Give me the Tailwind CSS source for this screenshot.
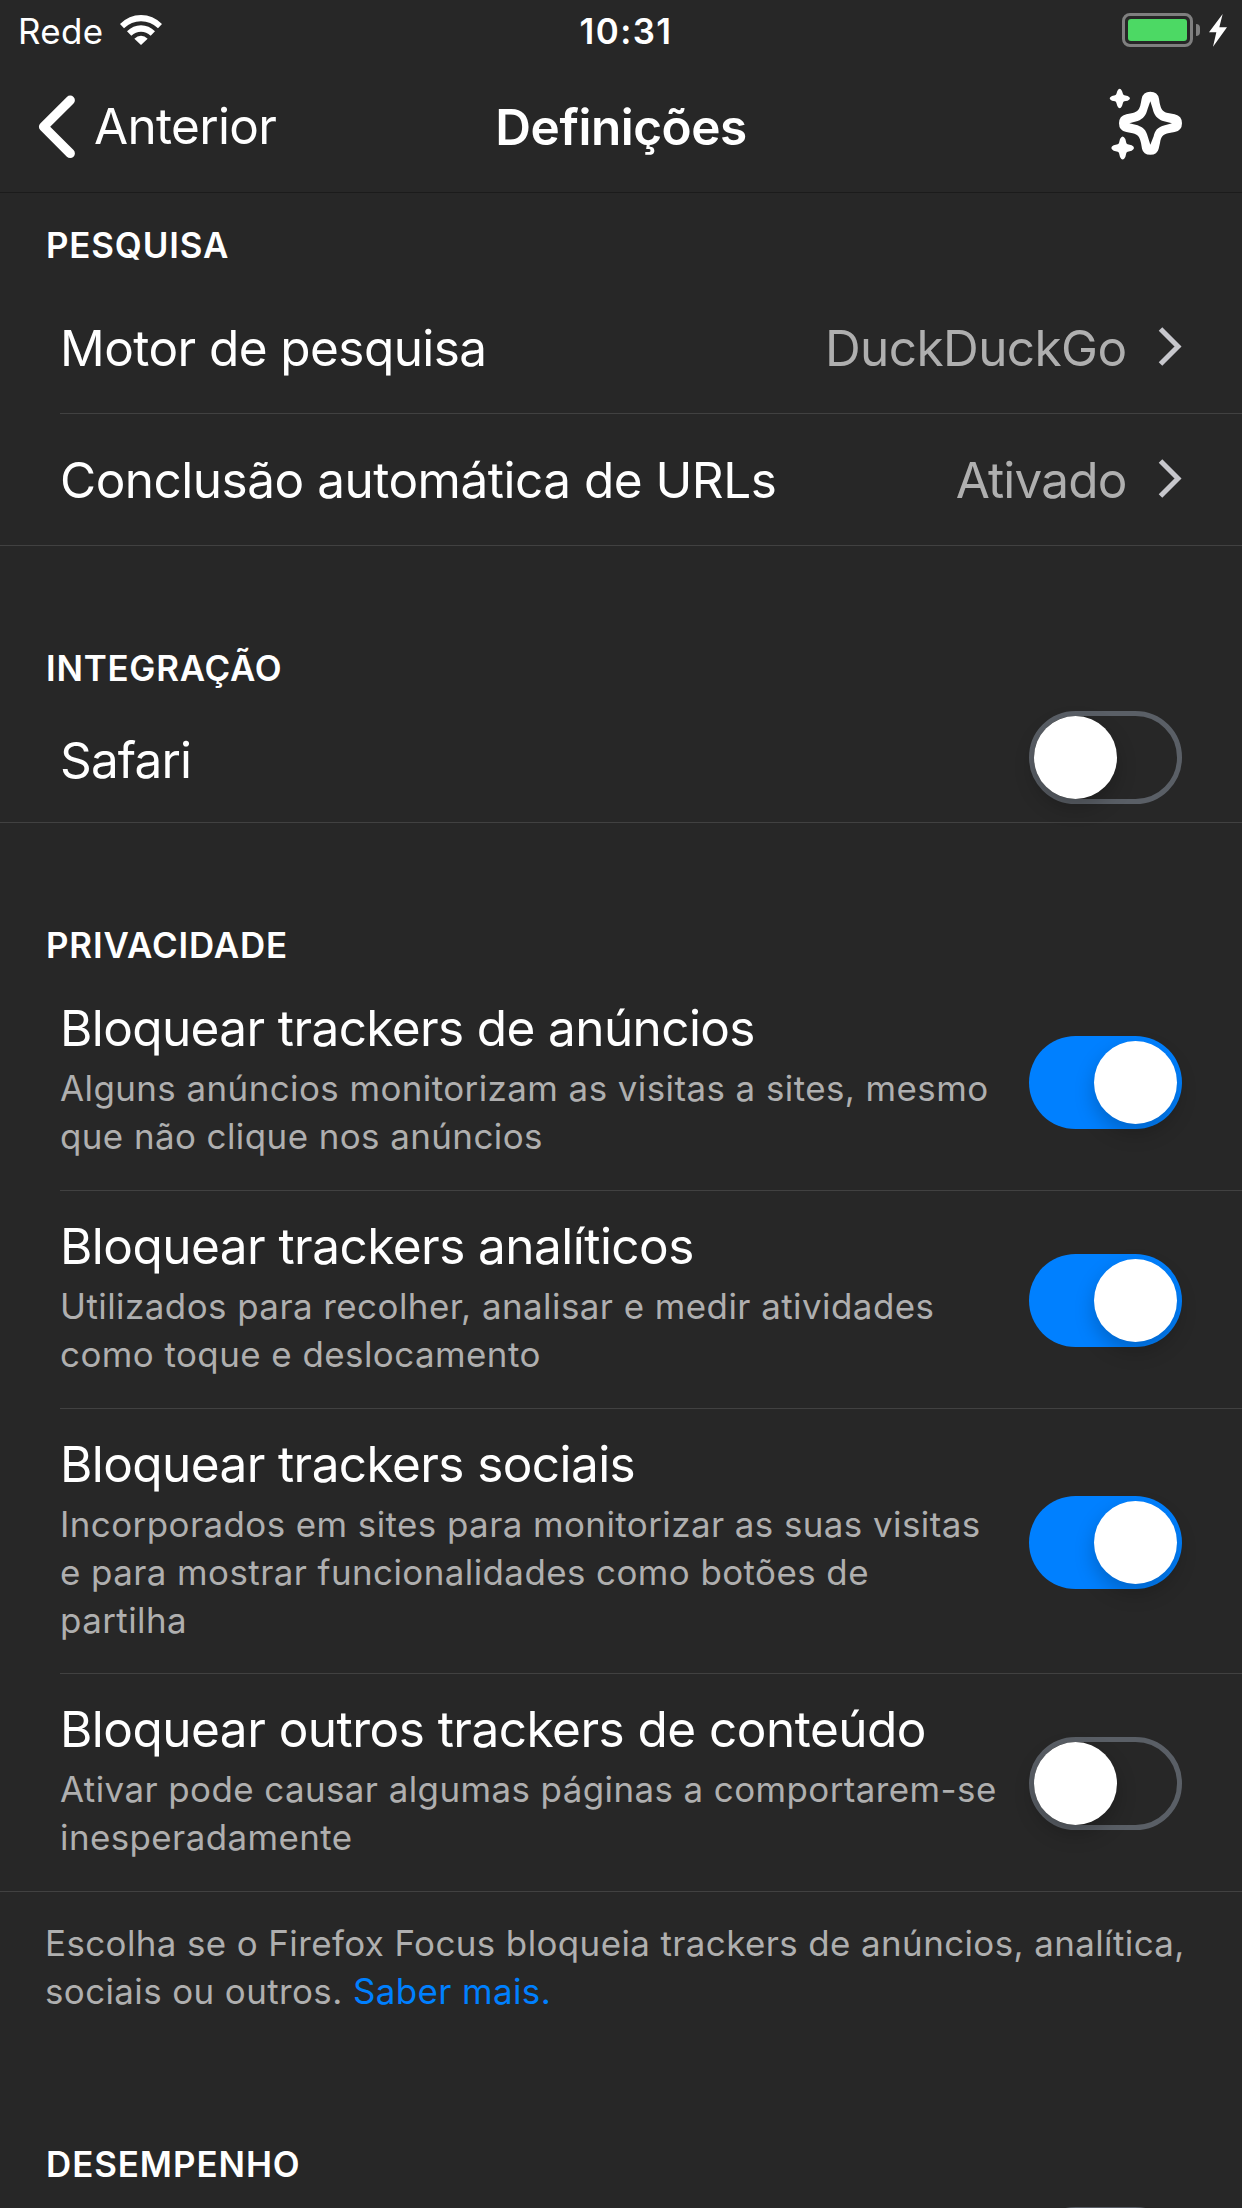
<!DOCTYPE html>
<html lang="pt">
<head>
<meta charset="utf-8">
<title>Definições</title>
<script src="https://cdn.jsdelivr.net/npm/@tailwindcss/browser@4"></script>
</head>
<body class="h-[2208px] w-[1242px] overflow-hidden bg-[#272727] font-['Inter',sans-serif] text-white">
<div class="flex h-[2208px] flex-col overflow-hidden">

  <!-- Status bar -->
  <div class="grid h-[62px] shrink-0 grid-cols-3 items-center text-[34.9px] leading-[42px]">
    <div class="flex items-center gap-[17px] pl-[18px]">
      <span class="tracking-[0.35px]">Rede</span>
      <svg class="mb-[2px] h-[30px] w-[42px]" viewBox="0 0 126 90" fill="#fff">
        <path d="M0 27Q27 0 63 0Q99 0 126 27L114 40Q92 19 63 19Q34 19 12 40Z"/>
        <path d="M21 49Q39 31 63 31Q87 31 105 49L92 62Q79 50 63 50Q47 50 34 62Z"/>
        <path d="M43 71Q52 62 63 62Q74 62 83 71L63 90Z"/>
      </svg>
    </div>
    <div class="pl-[10px] text-center font-semibold tracking-[1.4px]">10:31</div>
    <div class="flex items-center justify-end pr-[15px]">
      <div class="mb-[2px] h-[34px] w-[71px] rounded-[8px] border-[3px] border-[#7f7f7f] p-[3px]">
        <div class="h-full rounded-[3px] bg-[#4cd964]"></div>
      </div>
      <div class="mb-[2px] ml-[3px] h-[12px] w-[4px] rounded-r-full bg-[#7f7f7f]"></div>
      <svg class="mb-[1px] ml-[9px] h-[33px] w-[18px]" viewBox="0 0 54 99" fill="#fff"><path d="M41 0L0 55H22L12 98L54 40H31Z"/></svg>
    </div>
  </div>

  <!-- Navigation bar -->
  <div class="grid h-[131px] shrink-0 grid-cols-3 items-center border-b border-[#1b1b1b] text-[49.5px] leading-[60px]">
    <div class="flex items-center gap-[19px] pl-[38px]">
      <svg class="h-[64px] w-[37px]" viewBox="0 0 37 64" fill="none" stroke="#fff" stroke-width="9.4" stroke-linecap="round" stroke-linejoin="round"><path d="M32.2 5.2L5.6 31.8L32.2 58.4"/></svg>
      <span class="-mt-[3px] tracking-[-0.68px]">Anterior</span>
    </div>
    <div class="text-center font-semibold tracking-[-0.49px]">Definições</div>
    <div class="flex justify-end pr-[60px]">
      <svg class="-mt-[6px] h-[72px] w-[73px]" viewBox="201 265 219 216" fill="#fff">
        <path fill-rule="evenodd" d="M299 297Q303 276 325 276Q347 276 351 297L353 310C357 328 362 336 374 339L398 344Q420 349 420 371Q420 393 398 397L378 401C362 405 357 412 354 430L350 447Q346 465 325 465Q304 465 300 447L297 430C293 412 288 405 272 401L253 397Q231 393 231 371Q231 349 253 344L272 340C287 336 293 328 296 312ZM325 305L332 327C336 346 345 357 363 364L390 371L363 378C346 384 339 392 335 410L325 435L317 410C312 391 304 384 287 377L262 371L287 364C304 357 312 347 317 327Z"/>
        <path d="M226 274Q233 260 240 274L243 283Q244 286 247 287L257 289Q271 296 257 303L247 305Q244 306 243 309L240 319Q233 333 226 319L223 309Q222 306 219 305L210 303Q196 296 210 289L219 287Q222 286 223 283Z"/>
        <path d="M234 418Q242 403 250 418L253 430Q254 433 257 434L269 437Q283 445 269 453L257 456Q254 457 253 460L250 472Q242 487 234 472L231 460Q230 457 227 456L215 453Q201 445 215 437L227 434Q230 433 231 430Z"/>
      </svg>
    </div>
  </div>

  <!-- Pesquisa -->
  <h2 class="flex h-[89px] shrink-0 items-end pb-[16px] pl-[46px] text-[34.9px] leading-[42px] font-semibold tracking-[0.85px]">PESQUISA</h2>
  <div class="ml-[60px] flex h-[132px] shrink-0 items-center border-b border-[#414141] pr-[60px] text-[49.5px] leading-[60px]">
    <span class="grow pt-[1px] tracking-[-0.57px]">Motor de pesquisa</span>
    <span class="pt-[1px] tracking-[-0.6px] text-[#afafaf]">DuckDuckGo</span>
    <svg class="-mt-[2px] ml-[31.5px] h-[39px] w-[24px]" viewBox="0 0 24 39" fill="none" stroke="#c7c7cc" stroke-width="5"><path d="M2.5 2L20 19.5L2.5 37"/></svg>
  </div>
  <div class="flex h-[132px] shrink-0 items-center border-b border-[#414141] px-[60px] text-[49.5px] leading-[60px]">
    <span class="grow pt-[1px] tracking-[-0.5px]">Conclusão automática de URLs</span>
    <span class="pt-[1px] tracking-[-0.84px] text-[#afafaf]">Ativado</span>
    <svg class="-mt-[2px] ml-[31.5px] h-[39px] w-[24px]" viewBox="0 0 24 39" fill="none" stroke="#c7c7cc" stroke-width="5"><path d="M2.5 2L20 19.5L2.5 37"/></svg>
  </div>

  <!-- Integração -->
  <h2 class="flex h-[145px] shrink-0 items-end pb-[2px] pl-[46px] text-[34.9px] leading-[42px] font-semibold tracking-[0.75px]">INTEGRAÇÃO</h2>
  <div class="flex h-[132px] shrink-0 items-center justify-between border-b border-[#414141] px-[60px] text-[49.5px] leading-[60px]">
    <span class="pt-[6px] tracking-[-0.85px]">Safari</span>
    <div class="mt-[2px] h-[93px] w-[153px] shrink-0 rounded-full border-5 border-[#5a5f66]">
      <div class="size-[83px] rounded-full bg-white shadow-[0_9px_20px_rgba(0,0,0,0.22)]"></div>
    </div>
  </div>

  <!-- Privacidade -->
  <h2 class="flex h-[150px] shrink-0 items-end pb-[7px] pl-[46px] text-[34.9px] leading-[42px] font-semibold tracking-[0.85px]">PRIVACIDADE</h2>

  <div class="ml-[60px] flex shrink-0 items-center justify-between border-b border-[#414141] pr-[60px]">
    <div class="flex flex-col gap-[6px] pt-[25px] pb-[30px]">
      <div class="text-[49.5px] leading-[60px] tracking-[-0.61px]">Bloquear trackers de anúncios</div>
      <div class="text-[34.9px] leading-[48px] tracking-[0.44px] whitespace-nowrap text-[#afafaf]">Alguns anúncios monitorizam as visitas a sites, mesmo<br>que não clique nos anúncios</div>
    </div>
    <div class="mt-[2px] flex h-[93px] w-[153px] shrink-0 justify-end rounded-full bg-[#0080ff] p-[5px]">
      <div class="size-[83px] rounded-full bg-white shadow-[0_9px_20px_rgba(0,0,0,0.22)]"></div>
    </div>
  </div>

  <div class="ml-[60px] flex shrink-0 items-center justify-between border-b border-[#414141] pr-[60px]">
    <div class="flex flex-col gap-[6px] pt-[25px] pb-[30px]">
      <div class="text-[49.5px] leading-[60px] tracking-[-0.54px]">Bloquear trackers analíticos</div>
      <div class="text-[34.9px] leading-[48px] tracking-[0.46px] whitespace-nowrap text-[#afafaf]">Utilizados para recolher, analisar e medir atividades<br>como toque e deslocamento</div>
    </div>
    <div class="mt-[2px] flex h-[93px] w-[153px] shrink-0 justify-end rounded-full bg-[#0080ff] p-[5px]">
      <div class="size-[83px] rounded-full bg-white shadow-[0_9px_20px_rgba(0,0,0,0.22)]"></div>
    </div>
  </div>

  <div class="ml-[60px] flex shrink-0 items-center justify-between border-b border-[#414141] pr-[60px]">
    <div class="flex flex-col gap-[6px] pt-[25px] pb-[29px]">
      <div class="text-[49.5px] leading-[60px] tracking-[-0.59px]">Bloquear trackers sociais</div>
      <div class="text-[34.9px] leading-[48px] tracking-[0.44px] whitespace-nowrap text-[#afafaf]">Incorporados em sites para monitorizar as suas visitas<br>e para mostrar funcionalidades como botões de<br>partilha</div>
    </div>
    <div class="mt-[2px] flex h-[93px] w-[153px] shrink-0 justify-end rounded-full bg-[#0080ff] p-[5px]">
      <div class="size-[83px] rounded-full bg-white shadow-[0_9px_20px_rgba(0,0,0,0.22)]"></div>
    </div>
  </div>

  <div class="flex shrink-0 items-center justify-between border-b border-[#414141] px-[60px]">
    <div class="flex flex-col gap-[6px] pt-[25px] pb-[30px]">
      <div class="text-[49.5px] leading-[60px] tracking-[-0.52px]">Bloquear outros trackers de conteúdo</div>
      <div class="text-[34.9px] leading-[48px] tracking-[0.43px] whitespace-nowrap text-[#afafaf]">Ativar pode causar algumas páginas a comportarem-se<br>inesperadamente</div>
    </div>
    <div class="mt-[2px] h-[93px] w-[153px] shrink-0 rounded-full border-5 border-[#5a5f66]">
      <div class="size-[83px] rounded-full bg-white shadow-[0_9px_20px_rgba(0,0,0,0.22)]"></div>
    </div>
  </div>

  <p class="shrink-0 pt-[27px] pl-[45px] text-[34.9px] leading-[48px] tracking-[0.41px] whitespace-nowrap text-[#afafaf]">Escolha se o Firefox Focus bloqueia trackers de anúncios, analítica,<br>sociais ou outros. <a class="text-[#0080ff]">Saber mais.</a></p>

  <!-- Desempenho -->
  <h2 class="flex h-[170px] shrink-0 items-end pl-[46px] text-[34.9px] leading-[42px] font-semibold tracking-[0.93px]">DESEMPENHO</h2>
  <div class="flex shrink-0 justify-end pt-[22px] pr-[60px]">
    <div class="h-[93px] w-[153px] shrink-0 rounded-full border-5 border-[#5a5f66]"></div>
  </div>
</div>
</body>
</html>
